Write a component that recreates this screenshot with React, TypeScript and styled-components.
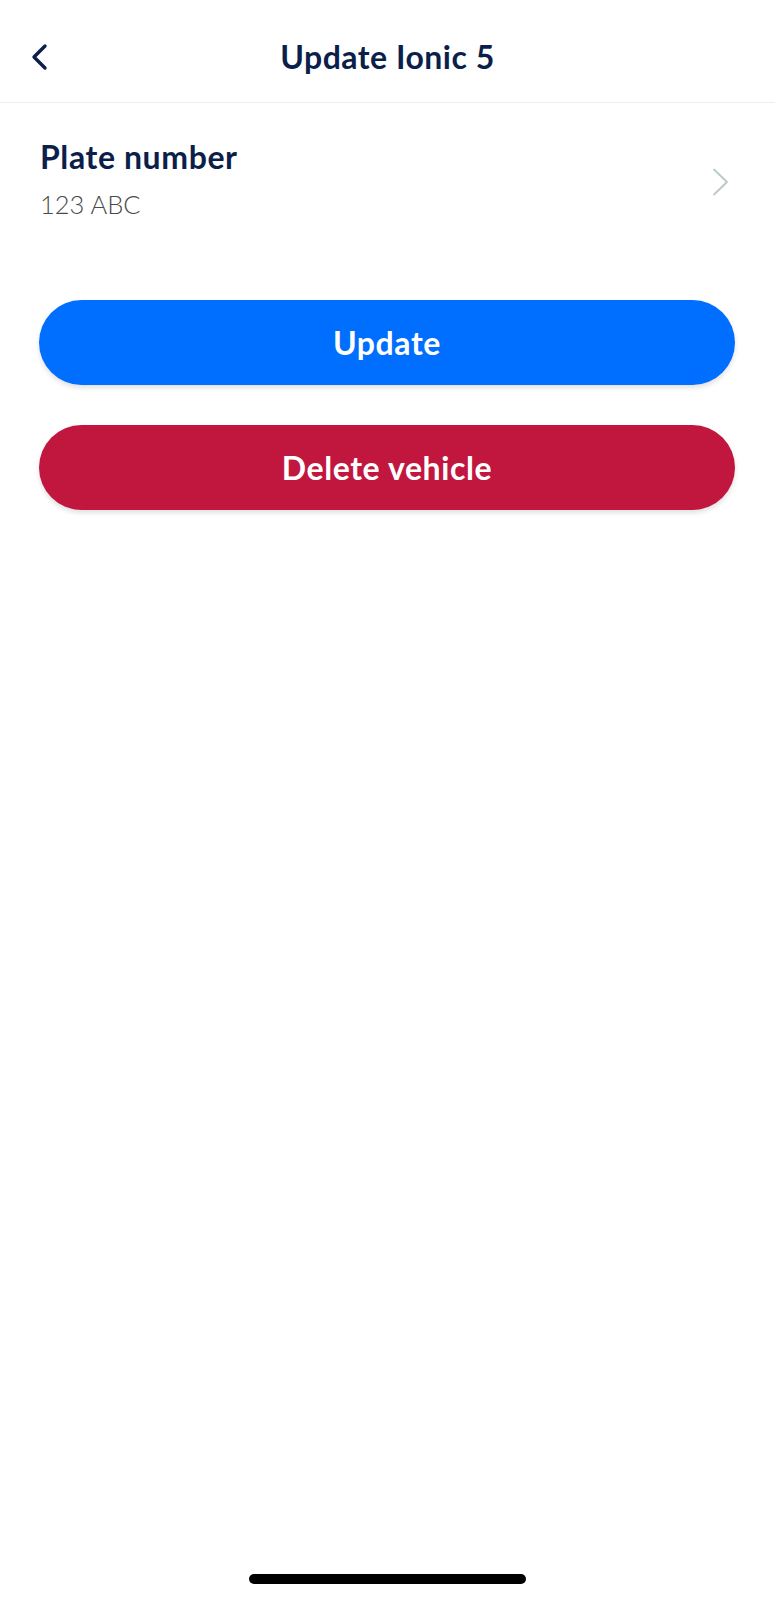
import styled, { createGlobalStyle } from "styled-components";

const GlobalStyle = createGlobalStyle`
  html, body {
    margin: 0;
    padding: 0;
    background: #ffffff;
  }

  body {
    font-family: "Lato", "Noto Sans", sans-serif;
  }

  * {
    box-sizing: border-box;
  }
`;

const colors = {
  navy: "#0c1f4a",
  blue: "#006efe",
  red: "#c1173f",
  grey: "#4a4a4a",
  chevron: "#b9c9c9",
  divider: "#eeeeee",
};

const StyledScreen = styled.div`
  display: flex;
  flex-direction: column;
  width: 100%;
  min-height: 1600px;
  background-color: #ffffff;
`;

const StyledHeader = styled.header`
  display: grid;
  grid-template-columns: 80px 1fr 80px;
  align-items: center;
  height: 103px;
  padding-top: 12px;
  border-bottom: 1px solid ${colors.divider};
`;

const StyledBackButton = styled.button`
  display: flex;
  align-items: center;
  justify-content: flex-start;
  padding: 0 0 0 30px;
  border: none;
  background: none;
  color: ${colors.navy};
  cursor: pointer;
`;

const StyledTitle = styled.h1`
  margin: 0;
  text-align: center;
  font-size: 32px;
  font-weight: 700;
  letter-spacing: 0.5px;
  line-height: 36px;
  color: ${colors.navy};
`;

const StyledFieldRow = styled.div`
  display: flex;
  align-items: center;
  justify-content: space-between;
  padding: 36px 46px 0 40px;
`;

const StyledFieldText = styled.div`
  display: flex;
  flex-direction: column;
  gap: 12px;
`;

const StyledFieldLabel = styled.span`
  font-size: 32px;
  font-weight: 700;
  letter-spacing: 0.6px;
  line-height: 36px;
  color: ${colors.navy};
`;

const StyledFieldValue = styled.span`
  font-size: 25.5px;
  font-weight: 300;
  line-height: 34px;
  color: ${colors.grey};
`;

const StyledActions = styled.div`
  display: flex;
  flex-direction: column;
  gap: 40px;
  padding: 79px 40px 0 39px;
`;

const StyledActionButton = styled.button<{ $variant: "primary" | "danger" }>`
  height: 85px;
  width: 100%;
  border: none;
  border-radius: 43px;
  background-color: ${({ $variant }) =>
    $variant === "primary" ? colors.blue : colors.red};
  box-shadow: 0 3px 5px rgba(0, 0, 0, 0.12);
  color: #ffffff;
  font-family: "Lato", "Noto Sans", sans-serif;
  font-size: 32px;
  font-weight: 700;
  letter-spacing: 0.6px;
  cursor: pointer;
`;

const StyledHomeIndicator = styled.div`
  align-self: center;
  width: 277px;
  height: 10px;
  margin-top: auto;
  margin-bottom: 16px;
  border-radius: 5px;
  background-color: #000000;
`;

const ChevronLeft = () => (
  <svg width="18" height="28" viewBox="0 0 18 28" fill="none">
    <path
      d="M15 3 L4 14 L15 25"
      stroke="currentColor"
      strokeWidth="3.4"
      strokeLinecap="round"
      strokeLinejoin="round"
    />
  </svg>
);

const ChevronRight = () => (
  <svg width="17" height="32" viewBox="0 0 17 32" fill="none">
    <path
      d="M2 5.5 L15 18 L2 30.5"
      stroke={colors.chevron}
      strokeWidth="1.8"
      strokeLinecap="round"
      strokeLinejoin="round"
    />
  </svg>
);

const App = (): JSX.Element => {
  return (
    <>
      <GlobalStyle />
      <StyledScreen>
        <StyledHeader>
          <StyledBackButton aria-label="Back">
            <ChevronLeft />
          </StyledBackButton>
          <StyledTitle>Update Ionic 5</StyledTitle>
          <span />
        </StyledHeader>
        <StyledFieldRow>
          <StyledFieldText>
            <StyledFieldLabel>Plate number</StyledFieldLabel>
            <StyledFieldValue>123 ABC</StyledFieldValue>
          </StyledFieldText>
          <ChevronRight />
        </StyledFieldRow>
        <StyledActions>
          <StyledActionButton $variant="primary">Update</StyledActionButton>
          <StyledActionButton $variant="danger">Delete vehicle</StyledActionButton>
        </StyledActions>
        <StyledHomeIndicator />
      </StyledScreen>
    </>
  );
};

export default App;
